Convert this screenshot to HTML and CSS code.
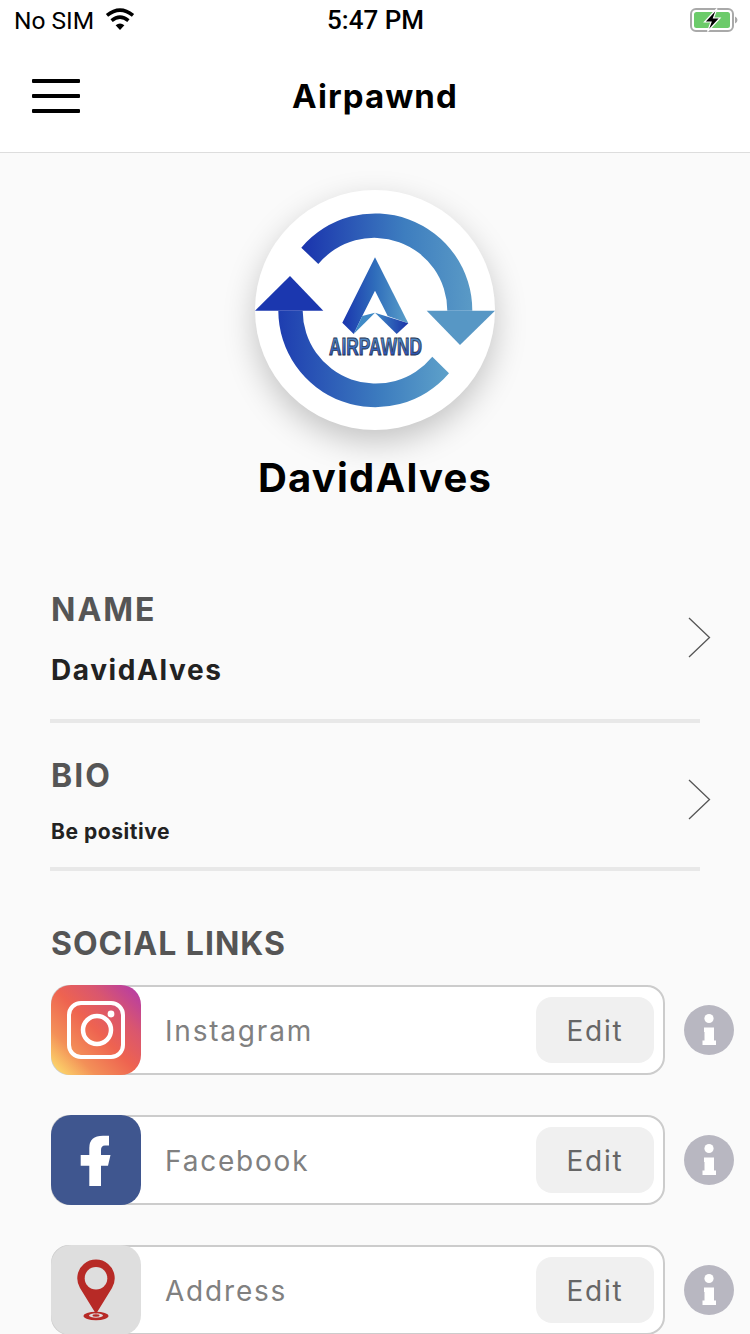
FILE: index.html
```html
<!DOCTYPE html>
<html lang="en">
<head>
    <meta charset="UTF-8">
    <meta name="viewport" content="width=device-width, initial-scale=1.0">
    <title>Airpawnd</title>

    <link rel="stylesheet" href="styles.css">
</head>
<body>

<div class="page">

    <div class="status">
        <div class="status-left">
            <span>No SIM</span>
            <svg class="wifi" width="30" height="22" viewBox="0 0 30 22">
                <path d="M15 22 L10.6 17.2 Q15 13.8 19.4 17.2 Z" fill="#000"/>
                <path d="M6.6 12.6 Q15 5.8 23.4 12.6" fill="none" stroke="#000" stroke-width="3.6"/>
                <path d="M2 7.4 Q15 -3 28 7.4" fill="none" stroke="#000" stroke-width="3.6"/>
            </svg>
        </div>
        <span class="status-time">5:47 PM</span>
        <svg class="battery" width="48" height="24" viewBox="0 0 48 24">
            <rect x="1" y="1" width="42" height="22" rx="5" fill="none" stroke="#a9a9a9" stroke-width="2"/>
            <rect x="4" y="4" width="36" height="16" rx="2.5" fill="#6ccb6a"/>
            <path d="M45 8.5 Q47.5 9.5 47.5 12 Q47.5 14.5 45 15.5 Z" fill="#a9a9a9"/>
            <path d="M27 0.5 L14.5 14 H21 L17.5 23.5 L30 10 H23.5 Z" fill="#000" stroke="#fff" stroke-width="1.2"/>
        </svg>
    </div>

    <div class="nav">
        <div class="burger"><i></i><i></i><i></i></div>
        <h1>Airpawnd</h1>
    </div>

    <div class="content">
        <div class="avatar">
            <svg width="240" height="240" viewBox="0 0 240 240">
                <defs>
                    <linearGradient id="arcTop" gradientUnits="userSpaceOnUse" x1="46" y1="0" x2="217" y2="0">
                        <stop offset="0" stop-color="#1a33ad"/>
                        <stop offset="0.6" stop-color="#3d7dbf"/>
                        <stop offset="1" stop-color="#5a9ac6"/>
                    </linearGradient>
                    <linearGradient id="arcBottom" gradientUnits="userSpaceOnUse" x1="10" y1="0" x2="190" y2="0">
                        <stop offset="0" stop-color="#1a35ae"/>
                        <stop offset="0.65" stop-color="#3d7dbf"/>
                        <stop offset="1" stop-color="#5c9fc9"/>
                    </linearGradient>
                    <linearGradient id="legLeft" gradientUnits="userSpaceOnUse" x1="87" y1="0" x2="120" y2="0">
                        <stop offset="0" stop-color="#1a35ae"/>
                        <stop offset="1" stop-color="#2f6dbb"/>
                    </linearGradient>
                    <linearGradient id="legRight" gradientUnits="userSpaceOnUse" x1="120" y1="0" x2="153" y2="0">
                        <stop offset="0" stop-color="#2f6dbb"/>
                        <stop offset="1" stop-color="#5a9fc9"/>
                    </linearGradient>
                    <linearGradient id="facet" gradientUnits="userSpaceOnUse" x1="120" y1="0" x2="153" y2="0">
                        <stop offset="0" stop-color="#3f8ac6"/>
                        <stop offset="1" stop-color="#1a33a8"/>
                    </linearGradient>
                    <linearGradient id="word" x1="0" y1="0" x2="0" y2="1">
                        <stop offset="0" stop-color="#5c9ed0"/>
                        <stop offset="1" stop-color="#1c3fae"/>
                    </linearGradient>
                </defs>
                <path d="M46.3 57.7 A97 97 0 0 1 217.3 120.7 L192.3 120.7 A73 73 0 0 0 63.3 74 Z" fill="url(#arcTop)"/>
                <path d="M171.7 120.7 H240 L205 155 Z" fill="#5797c5"/>
                <path d="M23.3 120.7 A97 97 0 0 0 194 183.3 L177.3 166.7 A73 73 0 0 1 47.7 120.7 Z" fill="url(#arcBottom)"/>
                <path d="M0 120.7 H68.3 L35 86 Z" fill="#1b37af"/>
                <path d="M120 67.3 V100.7 L107.3 126 L98.7 144 L87.3 132.7 Z" fill="url(#legLeft)"/>
                <path d="M120 67.3 L153.3 133.3 L132.7 126 L120 100.7 Z" fill="url(#legRight)"/>
                <path d="M98.7 144 L107.3 126 L120 122.7 Z" fill="#3f8ac6"/>
                <path d="M120 122.7 L153.3 133.3 L141.7 144 Z" fill="url(#facet)"/>
                <text class="logo-word" x="120.5" y="165" text-anchor="middle" textLength="93" lengthAdjust="spacingAndGlyphs" fill="url(#word)" stroke="#2b3550" stroke-width="0.9">AIRPAWND</text>
            </svg>
        </div>
        <div class="username">DavidAlves</div>

        <div class="field field-name">
            <div>
                <div class="label">NAME</div>
                <div class="value">DavidAlves</div>
            </div>
            <svg class="chevron" width="23" height="41" viewBox="0 0 23 41"><path d="M1 1 L21.5 20.5 L1 40" fill="none" stroke="#555" stroke-width="1.3"/></svg>
        </div>

        <div class="field field-bio">
            <div>
                <div class="label">BIO</div>
                <div class="value value-small">Be positive</div>
            </div>
            <svg class="chevron" width="23" height="41" viewBox="0 0 23 41"><path d="M1 1 L21.5 20.5 L1 40" fill="none" stroke="#555" stroke-width="1.3"/></svg>
        </div>

        <div class="label social-title">SOCIAL LINKS</div>

        <div class="social-row">
            <div class="social-box">
                <div class="tile tile-instagram">
                    <svg width="90" height="90" viewBox="0 0 90 90">
                        <rect x="18" y="18" width="54" height="54" rx="12" fill="none" stroke="#fff" stroke-width="4"/>
                        <circle cx="46" cy="45" r="14" fill="none" stroke="#fff" stroke-width="4.5"/>
                        <circle cx="60" cy="29" r="3.4" fill="#fff"/>
                    </svg>
                </div>
                <span class="social-name">Instagram</span>
                <span class="edit">Edit</span>
            </div>
            <svg class="info" width="50" height="50" viewBox="0 0 50 50"><use href="#info-icon"/></svg>
        </div>

        <div class="social-row">
            <div class="social-box">
                <div class="tile tile-facebook">
                    <svg width="90" height="90" viewBox="0 0 90 90">
                        <path d="M50 71 V50.7 H57 L59.5 40 H50 V35 Q50 30.5 54 30.5 H58 V20.7 H52 Q38.3 20.7 38.3 33 V40 H29.7 V50.7 H38.3 V71 Z" fill="#fff"/>
                    </svg>
                </div>
                <span class="social-name">Facebook</span>
                <span class="edit">Edit</span>
            </div>
            <svg class="info" width="50" height="50" viewBox="0 0 50 50"><use href="#info-icon"/></svg>
        </div>

        <div class="social-row">
            <div class="social-box">
                <div class="tile tile-address">
                    <svg width="90" height="90" viewBox="0 0 90 90">
                        <ellipse cx="45" cy="71" rx="12.5" ry="4.2" fill="#b72a26"/>
                        <ellipse cx="45" cy="70.5" rx="7" ry="2.2" fill="#dedede"/>
                        <ellipse cx="45" cy="70.5" rx="3.5" ry="1.2" fill="#b72a26"/>
                        <path d="M45 69 L29 43 A18.7 18.7 0 1 1 61 43 Z" fill="#b72a26"/>
                        <circle cx="45" cy="33.3" r="11.3" fill="#dedede"/>
                    </svg>
                </div>
                <span class="social-name">Address</span>
                <span class="edit">Edit</span>
            </div>
            <svg class="info" width="50" height="50" viewBox="0 0 50 50"><use href="#info-icon"/></svg>
        </div>
    </div>
</div>

<svg class="defs" width="0" height="0">
    <symbol id="info-icon" viewBox="0 0 50 50">
        <circle cx="25" cy="25" r="25" fill="#b8b7c1"/>
        <circle cx="25" cy="13.5" r="4.6" fill="#fff"/>
        <path d="M20 22.5 H30 V35.5 H32 V40 H18.5 V35.5 H20.5 V27 H20 Z" fill="#fff"/>
    </symbol>
</svg>

</body>
</html>
```

FILE: styles.css
```css
body {
    margin: 0;
    background-color: #ffffff;
    font-family: 'Inter', 'Open Sans', sans-serif;
}

.page {
    width: 750px;
    height: 1334px;
    overflow: hidden;
    background-color: #fafafa;
}

/* status bar */
.status {
    height: 40px;
    background-color: #ffffff;
    display: flex;
    align-items: center;
    justify-content: space-between;
    padding: 0 12px 0 14px;
    font-family: 'Roboto', sans-serif;
    font-size: 24.5px;
    color: #000000;
    position: relative;
}

.status-left {
    display: flex;
    align-items: center;
    gap: 11px;
}

.status-time {
    position: absolute;
    left: 327px;
    font-size: 26px;
    font-weight: 500;
}

.wifi {
    margin-top: -2px;
}

/* nav */
.nav {
    height: 112px;
    background-color: #ffffff;
    border-bottom: 1px solid #dddddd;
    display: flex;
    align-items: center;
    justify-content: center;
    position: relative;
}

.nav h1 {
    margin: 0;
    font-size: 33px;
    font-weight: 700;
    letter-spacing: 1.1px;
    color: #000000;
}

.burger {
    position: absolute;
    left: 32px;
    top: 39px;
    display: flex;
    flex-direction: column;
    gap: 11px;
}

.burger i {
    display: block;
    width: 48px;
    height: 4px;
    border-radius: 1px;
    background-color: #000000;
}

/* profile */
.content {
    padding: 37px 0 0 50px;
}

.avatar {
    width: 240px;
    height: 240px;
    margin-left: 205px;
    border-radius: 50%;
    background-color: #ffffff;
    box-shadow: 0 12px 32px rgba(0, 0, 0, 0.22);
}

.logo-word {
    font-family: 'Liberation Sans', sans-serif;
    font-size: 23px;
    font-weight: 700;
}

.username {
    width: 650px;
    margin-top: 24px;
    text-align: center;
    font-size: 40px;
    font-weight: 700;
    line-height: 48px;
    letter-spacing: 1.2px;
    color: #000000;
}

.field {
    width: 650px;
    display: flex;
    justify-content: space-between;
    border-bottom: 4px solid #e8e8e8;
}

.field-name {
    margin-top: 60px;
    height: 157px;
}

.field-bio {
    height: 144px;
}

.field-name .label {
    margin-top: 28px;
}

.field-bio .label {
    margin-top: 33px;
}

.label {
    font-size: 32px;
    font-weight: 700;
    line-height: 40px;
    letter-spacing: 2px;
    color: #555555;
    margin-left: 1px;
}

.value {
    margin: 20px 0 0 1px;
    font-size: 28px;
    font-weight: 700;
    line-height: 40px;
    letter-spacing: 1.6px;
    color: #222222;
}

.value-small {
    margin-top: 21px;
    font-size: 21px;
    line-height: 30px;
    letter-spacing: 0.55px;
}

.chevron {
    margin: 55px -11px 0 0;
}

.field-bio .chevron {
    margin-top: 56px;
}

.social-title {
    margin-top: 53px;
    letter-spacing: 1px;
}

/* social rows */
.social-row {
    display: flex;
    align-items: center;
    gap: 19px;
    width: 684px;
    margin-left: 1px;
    margin-top: 21px;
    margin-bottom: 40px;
}

.social-box {
    width: 614px;
    height: 90px;
    box-sizing: border-box;
    border: 2px solid #cccccc;
    border-radius: 18px;
    background-color: #ffffff;
    display: flex;
    align-items: center;
    flex-shrink: 0;
}

.social-row + .social-row {
    margin-top: 0;
}

.tile {
    width: 90px;
    height: 90px;
    margin-left: -2px;
    border-radius: 20px;
    flex-shrink: 0;
}

.tile-instagram {
    background: linear-gradient(45deg, #fcd76b 5%, #f39058 25%, #ee6350 50%, #d9566f 72%, #b83da3 95%);
}

.tile-facebook {
    background-color: #3f568f;
}

.tile-address {
    background-color: #dedede;
}

.social-name {
    margin-left: 24px;
    padding-top: 2px;
    font-size: 28px;
    letter-spacing: 1.8px;
    color: #808080;
    flex: 1;
}

.edit {
    width: 118px;
    height: 66px;
    margin-right: 9px;
    border-radius: 16px;
    background-color: #f0f0f0;
    color: #666666;
    font-size: 28px;
    letter-spacing: 1.8px;
    line-height: 68px;
    text-align: center;
}

.defs {
    position: absolute;
}
```
